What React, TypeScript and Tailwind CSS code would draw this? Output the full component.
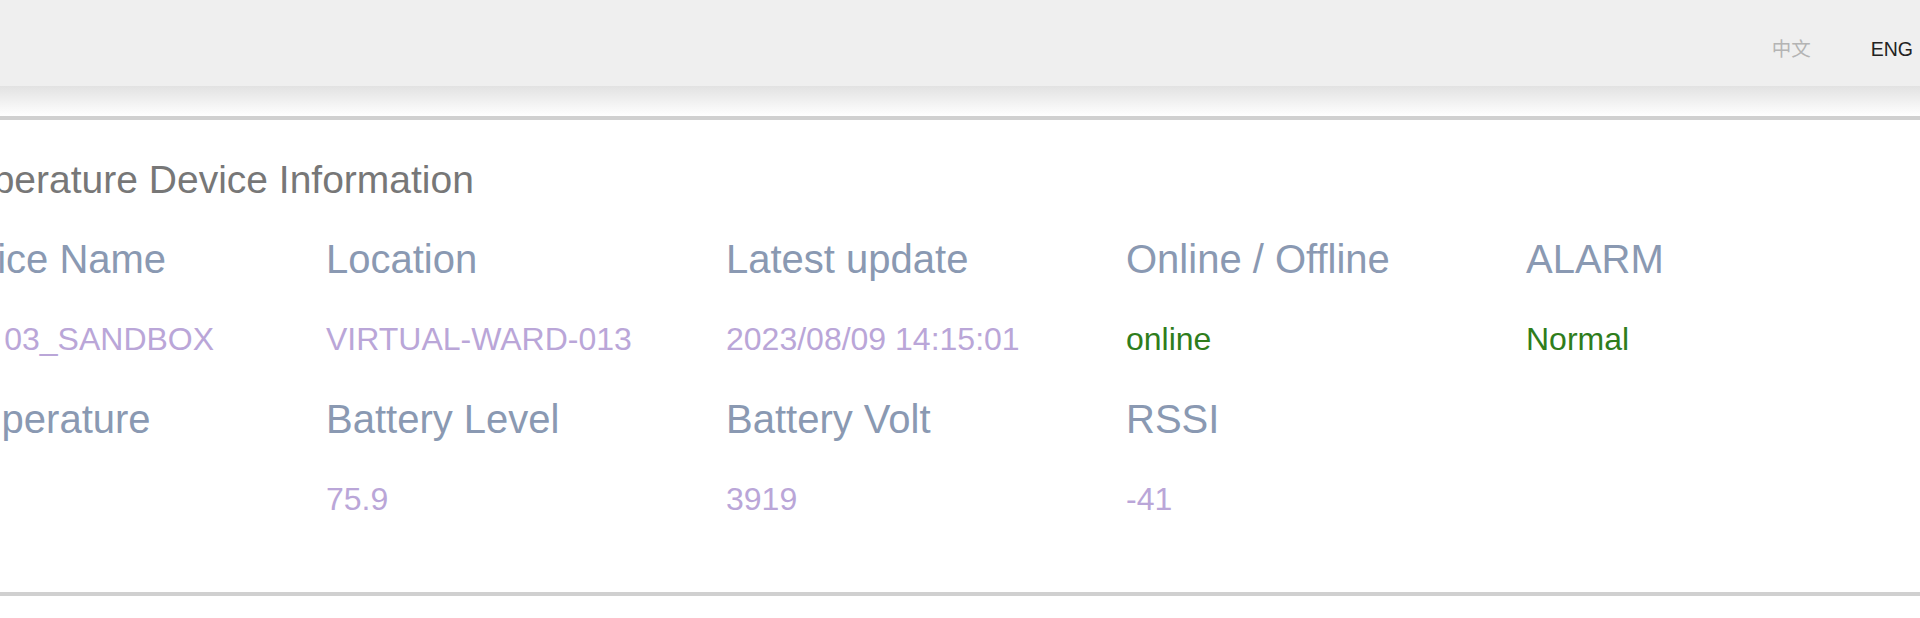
const font = { fontFamily: '"Liberation Sans", Arial, "Noto Sans CJK SC", sans-serif' };

type Cell = { label: string; value: string; ok?: boolean };

const rows: Cell[][] = [
  [
    { label: "Device Name", value: "THM 03_SANDBOX" },
    { label: "Location", value: "VIRTUAL-WARD-013" },
    { label: "Latest update", value: "2023/08/09 14:15:01" },
    { label: "Online / Offline", value: "online", ok: true },
    { label: "ALARM", value: "Normal", ok: true },
  ],
  [
    { label: "Temperature", value: "" },
    { label: "Battery Level", value: "75.9" },
    { label: "Battery Volt", value: "3919" },
    { label: "RSSI", value: "-41" },
  ],
];

function InfoRow({ cells }: { cells: Cell[] }) {
  return (
    <>
      {cells.map((c) => (
        <div key={c.label} className="text-[40px] leading-[48px] text-[#8a99b2] whitespace-nowrap">
          {c.label}
        </div>
      ))}
      {cells.length < 5 && <div />}
      {cells.map((c) => (
        <div
          key={c.label + "-v"}
          className={
            "text-[32px] leading-[40px] whitespace-nowrap " +
            (c.ok ? "text-[#2f7d1c]" : "text-[#baa6d8]")
          }
        >
          {c.value}
        </div>
      ))}
      {cells.length < 5 && <div />}
    </>
  );
}

export default function App() {
  return (
    <div className="w-[1920px] h-[618px] bg-white overflow-hidden" style={font}>
      {/* top bar */}
      <div className="h-[86px] bg-[#efefef] flex justify-end items-start pt-[37px] pr-[7px] gap-[60px] text-[19.5px] leading-[24px]">
        <button className="text-[#b4b4b4]">中文</button>
        <button className="text-[#222]">ENG</button>
      </div>
      <div className="h-[30px] bg-gradient-to-b from-[#e2e2e2] to-white" />
      <div className="h-[4px] bg-[#d0d0d0]" />

      {/* device card */}
      <div className="-ml-[74px] pt-[36px] pb-[73px]">
        <h2 className="-ml-[7px] text-[39px] leading-[48px] text-[#777777] font-normal whitespace-nowrap">
          Temperature Device Information
        </h2>
        <div className="mt-[31px] grid grid-cols-[repeat(5,400px)] gap-y-[36px]">
          {rows.map((r, i) => (
            <InfoRow key={i} cells={r} />
          ))}
        </div>
      </div>
      <div className="h-[4px] bg-[#d0d0d0]" />
    </div>
  );
}
